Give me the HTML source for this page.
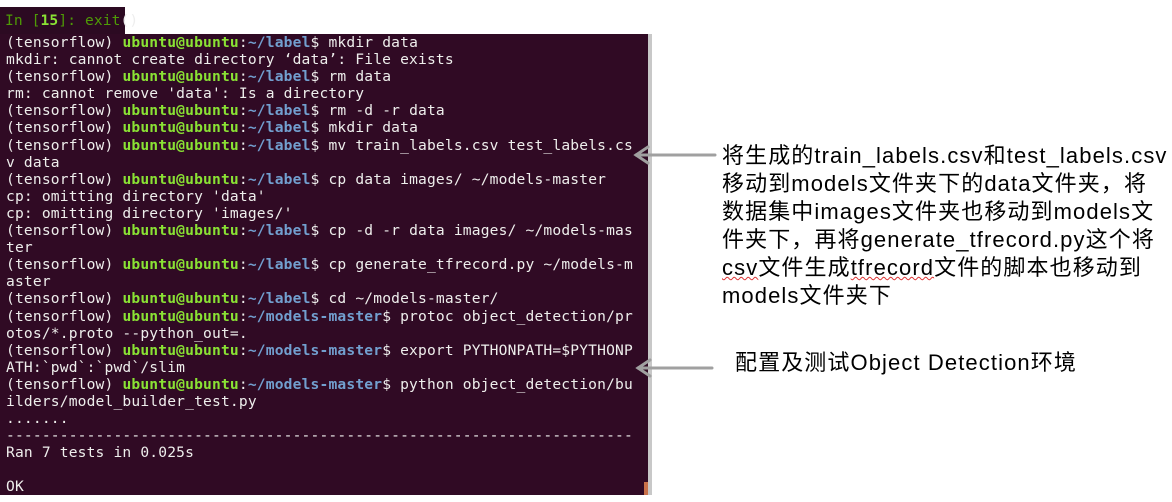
<!DOCTYPE html>
<html><head><meta charset="utf-8"><style>
body{margin:0;width:1172px;height:502px;background:#fff;position:relative;overflow:hidden}
#top{position:absolute;left:0;top:7px;width:125px;height:28px;background:#2c0a22}
#top pre{margin:0;position:absolute;left:5px;top:5px;font:14.6px/17px "DejaVu Sans Mono",monospace;color:#4e9a06;letter-spacing:0.1px}
#term{position:absolute;left:0;top:34px;width:648px;height:461px;background:#300a24;overflow:hidden}
#sb{position:absolute;left:648px;top:34px;width:4px;height:461px;background:#c8c8c8}
#term pre{margin:0;position:absolute;left:6px;top:0px;font:14.6px/17.1px "DejaVu Sans Mono",monospace;color:#eeeeec;letter-spacing:0.17px}
.g{color:#8ae234;font-weight:bold}.b{color:#729fcf;font-weight:bold}
.t{position:absolute;font-family:"Liberation Sans","Noto Sans CJK SC",sans-serif;font-size:22px;letter-spacing:1.1px;color:#000;line-height:28px;white-space:nowrap}
u{text-decoration:underline wavy #d33;text-decoration-thickness:1px}
</style></head><body>
<div id="top"><pre>In [<b style="color:#8ae234">15</b>]: exit<span style="color:#eee">()</span></pre></div>
<div id="term"><pre>(tensorflow) <span class="g">ubuntu@ubuntu</span>:<span class="b">~/label</span>$ mkdir data
mkdir: cannot create directory ‘data’: File exists
(tensorflow) <span class="g">ubuntu@ubuntu</span>:<span class="b">~/label</span>$ rm data
rm: cannot remove 'data': Is a directory
(tensorflow) <span class="g">ubuntu@ubuntu</span>:<span class="b">~/label</span>$ rm -d -r data
(tensorflow) <span class="g">ubuntu@ubuntu</span>:<span class="b">~/label</span>$ mkdir data
(tensorflow) <span class="g">ubuntu@ubuntu</span>:<span class="b">~/label</span>$ mv train_labels.csv test_labels.cs
v data
(tensorflow) <span class="g">ubuntu@ubuntu</span>:<span class="b">~/label</span>$ cp data images/ ~/models-master
cp: omitting directory 'data'
cp: omitting directory 'images/'
(tensorflow) <span class="g">ubuntu@ubuntu</span>:<span class="b">~/label</span>$ cp -d -r data images/ ~/models-mas
ter
(tensorflow) <span class="g">ubuntu@ubuntu</span>:<span class="b">~/label</span>$ cp generate_tfrecord.py ~/models-m
aster
(tensorflow) <span class="g">ubuntu@ubuntu</span>:<span class="b">~/label</span>$ cd ~/models-master/
(tensorflow) <span class="g">ubuntu@ubuntu</span>:<span class="b">~/models-master</span>$ protoc object_detection/pr
otos/*.proto --python_out=.
(tensorflow) <span class="g">ubuntu@ubuntu</span>:<span class="b">~/models-master</span>$ export PYTHONPATH=$PYTHONP
ATH:`pwd`:`pwd`/slim
(tensorflow) <span class="g">ubuntu@ubuntu</span>:<span class="b">~/models-master</span>$ python object_detection/bu
ilders/model_builder_test.py
.......
----------------------------------------------------------------------
Ran 7 tests in 0.025s

OK</pre>
<div style="position:absolute;left:644px;top:448px;width:4px;height:13px;background:#c9714a"></div>
</div>
<div id="sb"></div>
<svg style="position:absolute;left:0;top:0" width="1172" height="502">
<g stroke="#a0a0a0" stroke-width="3" fill="none" stroke-linecap="round">
<line x1="636" y1="155" x2="715" y2="155"/><polyline points="648,147 636,155 648,163"/>
<line x1="638" y1="368" x2="712" y2="368"/><polyline points="650,360 638,368 650,376"/>
</g></svg>
<div class="t" style="left:722px;top:142px">将生成的train_labels.csv和test_labels.csv<br>移动到models文件夹下的data文件夹，将<br>数据集中images文件夹也移动到models文<br>件夹下，再将generate_tfrecord.py这个将<br><u>csv</u>文件生成<u>tfrecord</u>文件的脚本也移动到<br>models文件夹下</div>
<div class="t" style="left:735px;top:349px">配置及测试Object Detection环境</div>
</body></html>
